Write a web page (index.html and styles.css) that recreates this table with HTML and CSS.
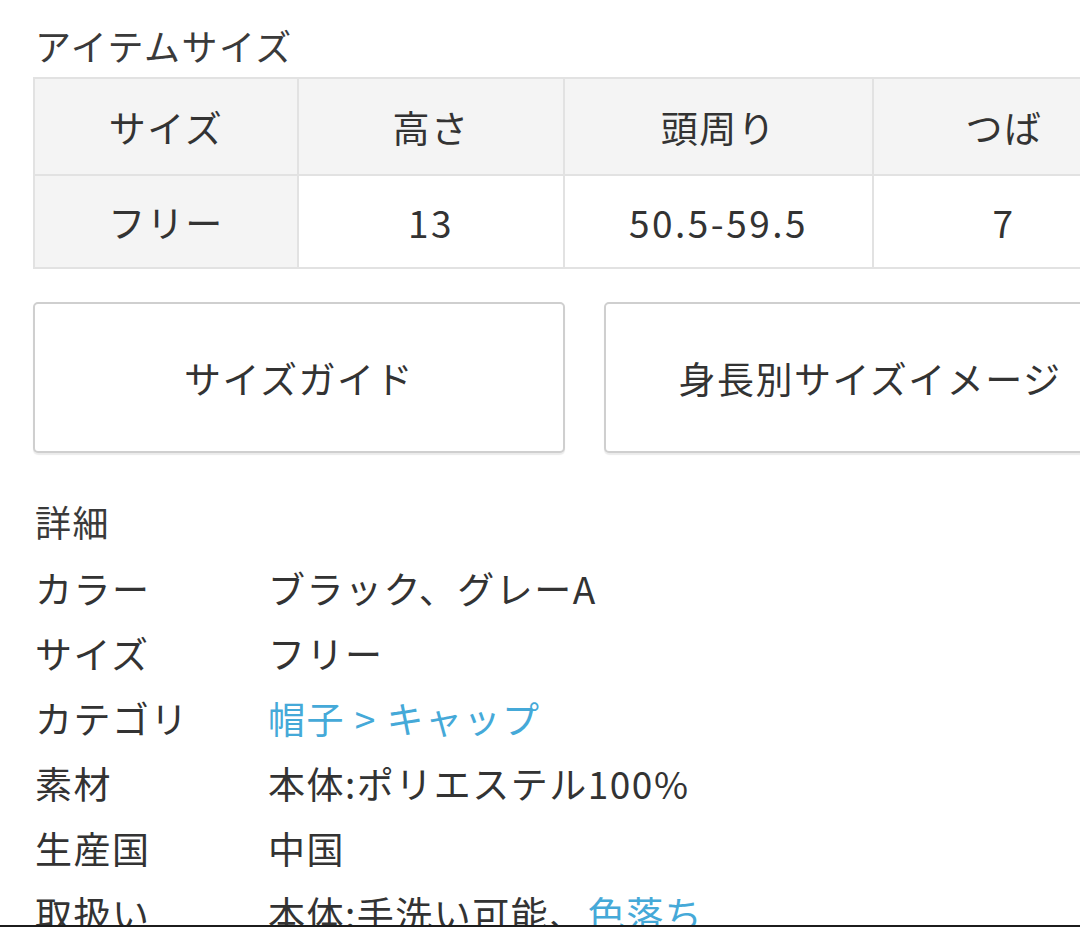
FILE: index.html
```html
<!DOCTYPE html>
<html lang="ja">
<head>
<meta charset="utf-8">
<link rel="stylesheet" href="styles.css">
</head>
<body>
<div class="frame">
  <div class="page">
    <h2 class="section-title">アイテムサイズ</h2>
    <table class="size-table">
      <tr>
        <th>サイズ</th>
        <th>高さ</th>
        <th>頭周り</th>
        <th>つば</th>
      </tr>
      <tr>
        <th>フリー</th>
        <td>13</td>
        <td>50.5-59.5</td>
        <td>7</td>
      </tr>
    </table>
    <div class="buttons">
      <div class="btn">サイズガイド</div>
      <div class="btn">身長別サイズイメージ</div>
    </div>
    <div class="detail-title">詳細</div>
    <dl class="details">
      <div class="row"><dt>カラー</dt><dd>ブラック、グレーA</dd></div>
      <div class="row"><dt>サイズ</dt><dd>フリー</dd></div>
      <div class="row"><dt>カテゴリ</dt><dd><span class="link">帽子 &gt; キャップ</span></dd></div>
      <div class="row"><dt>素材</dt><dd>本体:ポリエステル100%</dd></div>
      <div class="row"><dt>生産国</dt><dd>中国</dd></div>
      <div class="row"><dt>取扱い</dt><dd>本体:手洗い可能、<span class="link">色落ち</span></dd></div>
    </dl>
  </div>
</div>
</body>
</html>
```

FILE: styles.css
```css
html, body {
  margin: 0;
  padding: 0;
  background: #ffffff;
}

body {
  font-family: "Noto Sans CJK JP", "Noto Sans", sans-serif;
  color: #333333;
  letter-spacing: 1.5px;
}

.frame {
  width: 1080px;
  height: 925px;
  overflow: hidden;
  border-bottom: 2px solid #1c1c1c;
}

.page {
  width: 1103px;
  padding: 20px 0 0 33px;
}

.section-title {
  margin: 0 0 7px 2px;
  font-size: 36px;
  font-weight: 400;
  line-height: 50px;
  color: #3a3a3a;
}

.size-table {
  width: 1103px;
  border-collapse: collapse;
  table-layout: fixed;
}

.size-table th,
.size-table td {
  border: 2px solid #e2e2e2;
  font-size: 37px;
  font-weight: 400;
  line-height: 50px;
  text-align: center;
  padding: 0;
  color: #333333;
}

.size-table td {
  letter-spacing: 2.5px;
}

.size-table tr:first-child th,
.size-table tr:first-child td {
  height: 95px;
}

.size-table tr:last-child th,
.size-table tr:last-child td {
  height: 91px;
}

.size-table th {
  background: #f4f4f4;
}

.size-table td {
  background: #ffffff;
}

.size-table th:nth-child(1) { width: 262px; }
.size-table th:nth-child(2) { width: 264px; }
.size-table th:nth-child(3) { width: 307px; }

.buttons {
  display: flex;
  gap: 39px;
  margin-top: 33px;
}

.btn {
  width: 532px;
  height: 151px;
  box-sizing: border-box;
  border: 2px solid #cfcfcf;
  border-radius: 5px;
  box-shadow: 0 2px 1px rgba(0, 0, 0, 0.08);
  display: flex;
  align-items: center;
  justify-content: center;
  font-size: 37px;
  color: #333333;
  background: #ffffff;
}

.detail-title {
  margin-top: 36px;
  padding-left: 2px;
  font-size: 36px;
  line-height: 65px;
  color: #3a3a3a;
}

.details {
  margin: 2px 0 0 0;
  padding-left: 2px;
}

.details .row {
  display: flex;
  height: 65px;
  align-items: center;
  font-size: 37px;
  line-height: 65px;
}

.details dt {
  width: 233px;
  flex: none;
  margin: 0;
}

.details dd {
  margin: 0;
  white-space: nowrap;
}

.link {
  color: #45a9d8;
}
```
